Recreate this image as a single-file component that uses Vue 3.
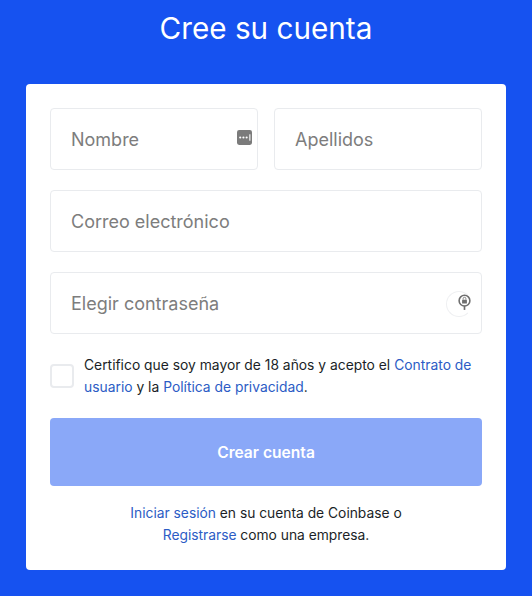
<template>
  <div class="page">
    <h1>Cree su cuenta</h1>
    <form class="card" @submit.prevent>
      <div class="name-row">
        <div class="field">
          <input placeholder="Nombre" />
          <svg class="dots-icon" viewBox="0 0 14 14">
            <rect width="14" height="14" rx="2" fill="#7b7b7b" />
            <circle cx="3" cy="7" r="1" fill="#fff" />
            <circle cx="6" cy="7" r="1" fill="#fff" />
            <circle cx="9" cy="7" r="1" fill="#fff" />
            <rect x="11.5" y="4" width="1" height="6" fill="#fff" />
          </svg>
        </div>
        <div class="field">
          <input placeholder="Apellidos" />
        </div>
      </div>
      <div class="field">
        <input placeholder="Correo electrónico" />
      </div>
      <div class="field">
        <input placeholder="Elegir contraseña" type="password" />
        <span class="pw-ring"></span>
        <svg class="pw-icon" viewBox="0 0 14 18">
          <circle cx="7" cy="7" r="5.8" fill="none" stroke="#6f6f6f" stroke-width="1.7" />
          <rect x="4.4" y="6" width="5.2" height="4.2" rx="0.6" fill="#6f6f6f" />
          <path d="M5.5 6V4.9a1.5 1.5 0 0 1 3 0V6" fill="none" stroke="#6f6f6f" stroke-width="0.9" />
          <rect x="6.1" y="12.5" width="1.8" height="4.5" fill="#6f6f6f" />
        </svg>
      </div>
      <div class="terms">
        <span class="checkbox"></span>
        <p>Certifico que soy mayor de 18 años y acepto el <a>Contrato de usuario</a> y la <a>Política de privacidad</a>.</p>
      </div>
      <button type="submit">Crear cuenta</button>
      <p class="footer"><a>Iniciar sesión</a> en su cuenta de Coinbase o<br /><a>Registrarse</a> como una empresa.</p>
    </form>
  </div>
</template>

<script setup>
</script>

<style>
html, body {
  margin: 0;
  background: #1652f0;
}
</style>

<style scoped>
.page {
  height: 596px;
  overflow: hidden;
  background: #1652f0;
}

h1 {
  margin: 0;
  padding-top: 9px;
  height: 84px;
  box-sizing: border-box;
  color: #fff;
  font-family: Inter, sans-serif;
  font-size: 29.7px;
  font-weight: 400;
  line-height: 38px;
  text-align: center;
}

.card {
  width: 480px;
  height: 486px;
  margin-left: 26px;
  padding: 24px;
  box-sizing: border-box;
  background: #fff;
  border-radius: 4px;
}

.name-row {
  display: grid;
  grid-template-columns: 208px 208px;
  gap: 16px;
}

.field {
  position: relative;
  height: 62px;
  margin-bottom: 20px;
}

input {
  width: 100%;
  height: 100%;
  box-sizing: border-box;
  padding: 0 20px;
  border: 1px solid #e9ebee;
  border-radius: 4px;
  outline: none;
  font-family: Inter, sans-serif;
  font-size: 18px;
}

input::placeholder {
  color: #7d7d7d;
  opacity: 1;
}

.dots-icon {
  position: absolute;
  right: 6px;
  top: 22px;
  width: 15px;
  height: 15px;
}

.pw-ring {
  position: absolute;
  right: 10px;
  top: 19px;
  width: 26px;
  height: 26px;
  box-sizing: border-box;
  border: 1px solid #eff0f2;
  border-right-color: transparent;
  border-radius: 50%;
}

.pw-icon {
  position: absolute;
  right: 11px;
  top: 22px;
  width: 13px;
  height: 17px;
}

.terms {
  display: flex;
  align-items: center;
  gap: 10px;
  margin-bottom: 20px;
}

.checkbox {
  flex: none;
  width: 24px;
  height: 24px;
  box-sizing: border-box;
  border: 2px solid #e9ebee;
  border-radius: 4px;
}

.terms p {
  margin: 0;
  color: #1b1f27;
  font-family: Inter, sans-serif;
  font-size: 13.85px;
  line-height: 22px;
}

a {
  color: #2c5cc5;
}

button {
  display: block;
  width: 100%;
  height: 68px;
  border: none;
  border-radius: 4px;
  background: #8aa8f8;
  color: #fff;
  font-family: Inter, sans-serif;
  font-size: 15.6px;
  font-weight: 600;
}

.footer {
  margin: 16px 0 0;
  color: #1b1f27;
  font-family: Inter, sans-serif;
  font-size: 13.8px;
  line-height: 22px;
  text-align: center;
}
</style>
